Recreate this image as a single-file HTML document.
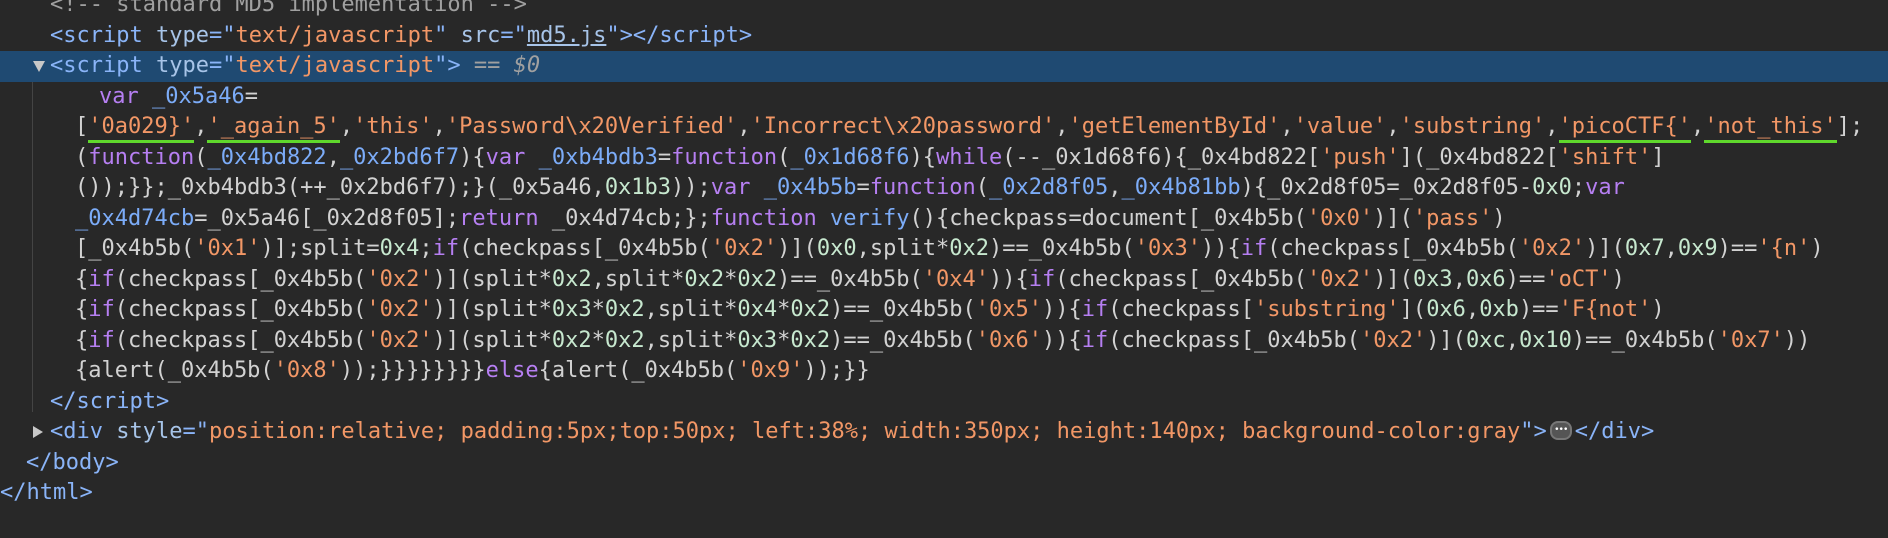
<!DOCTYPE html>
<html><head><meta charset="utf-8"><style>
html,body{margin:0;padding:0;background:#282828;width:1888px;height:538px;overflow:hidden}
.wrap{position:absolute;left:0;top:-10px;width:1888px;font-family:"DejaVu Sans Mono","Liberation Mono",monospace;font-size:22px;color:#d2d2d2}
.l{height:30.5px;line-height:30.5px;position:relative;white-space:pre}
.hl{background:#1f4a72}
.g{color:#a0a0a0}.t{color:#8ab4f8}.a{color:#a7c4e8}.s{color:#f29766}.k{color:#b67ff2}.b{color:#7cacf8}.n{color:#c7e8cf}
.u{text-decoration:underline}
.gr{border-bottom:3px solid #5fd82c;padding-bottom:1px}
.guide{position:absolute;left:32px;top:82px;width:1px;height:330px;background:#444}
.tri{position:absolute;width:0;height:0;border-style:solid}
.dots{display:inline-block;width:22px;height:19px;margin:0 3px;border:2px solid #777;border-radius:8px;background:#555;box-sizing:border-box;vertical-align:middle;position:relative;top:-2px;color:#fff;font-size:9px;line-height:14px;text-align:center;letter-spacing:-1px}
</style></head><body>
<div class="guide"></div>
<div class="wrap"><div class="l" style="padding-left:50px"><span class="g">&lt;!-- standard MD5 implementation --&gt;</span></div><div class="l" style="padding-left:50px"><span class="t">&lt;script</span> <span class="a">type</span><span class="t">="</span><span class="s">text/javascript</span><span class="t">"</span> <span class="a">src</span><span class="t">="</span><span class="a u">md5.js</span><span class="t">"&gt;&lt;/script&gt;</span></div><div class="l hl" style="padding-left:50px"><span class="tri" style="left:33px;top:10px;border-width:11px 6px 0 6px;border-color:#c8c8c8 transparent transparent transparent"></span><span class="t">&lt;script</span> <span class="a">type</span><span class="t">="</span><span class="s">text/javascript</span><span class="t">"&gt;</span> <span class="g">== <i>$0</i></span></div><div class="l" style="padding-left:99px"><span class="k">var</span> <span class="b">_0x5a46</span>=</div><div class="l" style="padding-left:75px">[<span class="s gr">'0a029}'</span>,<span class="s gr">'_again_5'</span>,<span class="s">'this'</span>,<span class="s">'Password\x20Verified'</span>,<span class="s">'Incorrect\x20password'</span>,<span class="s">'getElementById'</span>,<span class="s">'value'</span>,<span class="s">'substring'</span>,<span class="s gr">'picoCTF{'</span>,<span class="s gr">'not_this'</span>];</div><div class="l" style="padding-left:75px">(<span class="k">function</span>(<span class="b">_0x4bd822</span>,<span class="b">_0x2bd6f7</span>){<span class="k">var</span> <span class="b">_0xb4bdb3</span>=<span class="k">function</span>(<span class="b">_0x1d68f6</span>){<span class="k">while</span>(--_0x1d68f6){_0x4bd822[<span class="s">'push'</span>](_0x4bd822[<span class="s">'shift'</span>]</div><div class="l" style="padding-left:75px">());}};_0xb4bdb3(++_0x2bd6f7);}(_0x5a46,<span class="n">0x1b3</span>));<span class="k">var</span> <span class="b">_0x4b5b</span>=<span class="k">function</span>(<span class="b">_0x2d8f05</span>,<span class="b">_0x4b81bb</span>){_0x2d8f05=_0x2d8f05-<span class="n">0x0</span>;<span class="k">var</span></div><div class="l" style="padding-left:75px"><span class="b">_0x4d74cb</span>=_0x5a46[_0x2d8f05];<span class="k">return</span> _0x4d74cb;};<span class="k">function</span> <span class="b">verify</span>(){checkpass=document[_0x4b5b(<span class="s">'0x0'</span>)](<span class="s">'pass'</span>)</div><div class="l" style="padding-left:75px">[_0x4b5b(<span class="s">'0x1'</span>)];split=<span class="n">0x4</span>;<span class="k">if</span>(checkpass[_0x4b5b(<span class="s">'0x2'</span>)](<span class="n">0x0</span>,split*<span class="n">0x2</span>)==_0x4b5b(<span class="s">'0x3'</span>)){<span class="k">if</span>(checkpass[_0x4b5b(<span class="s">'0x2'</span>)](<span class="n">0x7</span>,<span class="n">0x9</span>)==<span class="s">'{n'</span>)</div><div class="l" style="padding-left:75px">{<span class="k">if</span>(checkpass[_0x4b5b(<span class="s">'0x2'</span>)](split*<span class="n">0x2</span>,split*<span class="n">0x2</span>*<span class="n">0x2</span>)==_0x4b5b(<span class="s">'0x4'</span>)){<span class="k">if</span>(checkpass[_0x4b5b(<span class="s">'0x2'</span>)](<span class="n">0x3</span>,<span class="n">0x6</span>)==<span class="s">'oCT'</span>)</div><div class="l" style="padding-left:75px">{<span class="k">if</span>(checkpass[_0x4b5b(<span class="s">'0x2'</span>)](split*<span class="n">0x3</span>*<span class="n">0x2</span>,split*<span class="n">0x4</span>*<span class="n">0x2</span>)==_0x4b5b(<span class="s">'0x5'</span>)){<span class="k">if</span>(checkpass[<span class="s">'substring'</span>](<span class="n">0x6</span>,<span class="n">0xb</span>)==<span class="s">'F{not'</span>)</div><div class="l" style="padding-left:75px">{<span class="k">if</span>(checkpass[_0x4b5b(<span class="s">'0x2'</span>)](split*<span class="n">0x2</span>*<span class="n">0x2</span>,split*<span class="n">0x3</span>*<span class="n">0x2</span>)==_0x4b5b(<span class="s">'0x6'</span>)){<span class="k">if</span>(checkpass[_0x4b5b(<span class="s">'0x2'</span>)](<span class="n">0xc</span>,<span class="n">0x10</span>)==_0x4b5b(<span class="s">'0x7'</span>))</div><div class="l" style="padding-left:75px">{alert(_0x4b5b(<span class="s">'0x8'</span>));}}}}}}}}<span class="k">else</span>{alert(_0x4b5b(<span class="s">'0x9'</span>));}}</div><div class="l" style="padding-left:50px"><span class="t">&lt;/script&gt;</span></div><div class="l" style="padding-left:50px"><span class="tri" style="left:33px;top:9px;border-width:6px 0 6px 10px;border-color:transparent transparent transparent #c8c8c8"></span><span class="t">&lt;div</span> <span class="a">style</span><span class="t">="</span><span class="s">position:relative; padding:5px;top:50px; left:38%; width:350px; height:140px; background-color:gray</span><span class="t">"&gt;</span><span class="dots">&bull;&bull;&bull;</span><span class="t">&lt;/div&gt;</span></div><div class="l" style="padding-left:26px"><span class="t">&lt;/body&gt;</span></div><div class="l" style="padding-left:0px"><span class="t">&lt;/html&gt;</span></div></div>
</body></html>
